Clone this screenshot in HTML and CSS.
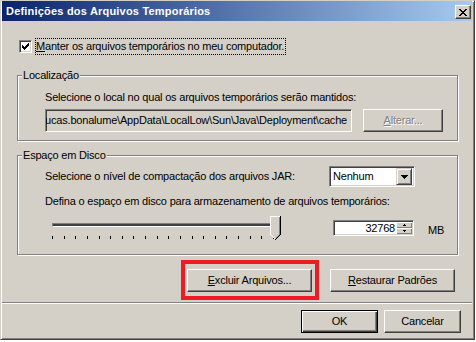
FILE: index.html
```html
<!DOCTYPE html>
<html lang="pt-BR">
<head>
    <meta charset="UTF-8">
    <meta name="viewport" content="width=device-width, initial-scale=1.0">
    <title>Definições dos Arquivos Temporários</title>
    <link rel="stylesheet" href="styles.css">
</head>
<body>
    <div class="window">
        <div class="titlebar">
            <span class="title">Definições dos Arquivos Temporários</span>
            <button class="close">
                <svg width="8" height="7" viewBox="0 0 8 7" shape-rendering="crispEdges"><path d="M0 0h2v1H0z M6 0h2v1H6z M1 1h2v1H1z M5 1h2v1H5z M2 2h4v1H2z M3 3h2v1H3z M2 4h4v1H2z M1 5h2v1H1z M5 5h2v1H5z M0 6h2v1H0z M6 6h2v1H6z"/></svg>
            </button>
        </div>
        <div class="content">
            <div class="keep">
                <span class="check">
                    <svg width="7" height="7" viewBox="0 0 7 7" shape-rendering="crispEdges"><path d="M6 0h1v1H6z M5 1h2v1H5z M0 2h1v1H0z M4 2h3v1H4z M0 3h2v1H0z M3 3h3v1H3z M0 4h5v1H0z M1 5h3v1H1z M2 6h1v1H2z"/></svg>
                </span>
                <span class="focus"><u>M</u>anter os arquivos temporários no meu computador.</span>
            </div>

            <div class="group loc">
                <div class="legend">Localização</div>
                <p class="label">Selecione o local no qual os arquivos temporários serão mantidos:</p>
                <div class="row">
                    <div class="field path"><span>C:\Users\lucas.bonalume\AppData\LocalLow\Sun\Java\Deployment\cache</span></div>
                    <button class="btn change disabled"><u>A</u>lterar...</button>
                </div>
            </div>

            <div class="group disk">
                <div class="legend">Espaço em Disco</div>
                <div class="row between">
                    <span>Selecione o nível de compactação dos arquivos JAR:</span>
                    <div class="combo">
                        <span class="combo-text">Nenhum</span>
                        <span class="drop">
                            <svg width="7" height="4" viewBox="0 0 7 4" shape-rendering="crispEdges"><path d="M0 0h7v1H0z M1 1h5v1H1z M2 2h3v1H2z M3 3h1v1H3z"/></svg>
                        </span>
                    </div>
                </div>
                <p class="label">Defina o espaço em disco para armazenamento de arquivos temporários:</p>
                <div class="row size">
                    <div class="slider">
                        <div class="track"></div>
                        <svg class="thumb" width="11" height="24" viewBox="0 0 11 24" shape-rendering="crispEdges">
                            <polygon points="0,0 11,0 11,19 5.5,24 0,19" fill="#d4d0c8"/>
                            <path fill="#fff" d="M0 0h10v1H1v18H0z M1 19h1v1H1z M2 20h1v1H2z M3 21h1v1H3z M4 22h1v1H4z"/>
                            <path fill="#808080" d="M9 1h1v18H9z M8 19h1v1H8z M7 20h1v1H7z M6 21h1v1H6z"/>
                            <path fill="#000" d="M10 0h1v19h-1z M9 19h1v1H9z M8 20h1v1H8z M7 21h1v1H7z M6 22h1v1H6z M5 23h1v1H5z"/>
                        </svg>
                        <div class="ticks">
                            <i></i><i></i><i></i><i></i><i></i><i></i><i></i><i></i><i></i><i></i>
                            <i></i><i></i><i></i><i></i><i></i><i></i><i></i><i></i><i></i><i></i>
                        </div>
                    </div>
                    <div class="spin">
                        <span class="spin-value">32768</span>
                        <span class="arrows">
                            <span class="arrow"><svg width="3" height="2" viewBox="0 0 3 2" shape-rendering="crispEdges"><path d="M1 0h1v1H1z M0 1h3v1H0z"/></svg></span>
                            <span class="arrow"><svg width="3" height="2" viewBox="0 0 3 2" shape-rendering="crispEdges"><path d="M0 0h3v1H0z M1 1h1v1H1z"/></svg></span>
                        </span>
                    </div>
                    <span class="unit">MB</span>
                </div>
            </div>

            <div class="actions">
                <span class="highlight"><button class="btn wide"><u>E</u>xcluir Arquivos...</button></span>
                <button class="btn wide"><u>R</u>estaurar Padrões</button>
            </div>
        </div>
        <div class="separator"></div>
        <div class="footer">
            <button class="btn default">OK</button>
            <button class="btn">Cancelar</button>
        </div>
    </div>
</body>
</html>
```
FILE: styles.css
```css
body{
    margin: 0;
    font: 11px/13px "Liberation Sans", Tahoma, sans-serif;
    letter-spacing: -0.2px;
    color: #000;
}
p{
    margin: 0;
}
u{
    text-decoration: underline;
}
.window{
    width: 475px;
    height: 340px;
    box-sizing: border-box;
    background: #d4d0c8;
    border: 1px solid;
    border-color: #d4d0c8 #404040 #404040 #d4d0c8;
    box-shadow: inset 1px 1px #fff, inset -1px -1px #808080;
    padding: 0 2px 0 1px;
}
.titlebar{
    height: 20px;
    display: flex;
    align-items: center;
    justify-content: space-between;
    padding: 0 1px 0 4px;
    background: linear-gradient(to right, #0a246a, #a6caf0);
    color: #fff;
    font-weight: bold;
    letter-spacing: 0.2px;
}
.close{
    width: 16px;
    height: 14px;
    margin-top: 2px;
    padding: 0;
    display: flex;
    align-items: center;
    justify-content: center;
    background: #d4d0c8;
    border: 1px solid;
    border-color: #fff #404040 #404040 #fff;
    box-shadow: inset -1px -1px #808080, inset 1px 1px #d4d0c8;
}
.close svg{
    display: block;
}

.content{
    padding: 17px 14px 0 15px;
}
.keep{
    display: flex;
    align-items: center;
    height: 17px;
}
.check{
    width: 13px;
    height: 13px;
    box-sizing: border-box;
    margin: 0 3px 0 2px;
    padding: 2px;
    background: #fff;
    border: 1px solid;
    border-color: #808080 #fff #fff #808080;
    box-shadow: inset 1px 1px #404040, inset -1px -1px #d4d0c8;
}
.check svg{
    display: block;
}
.focus{
    border: 1px dotted #000;
    padding: 1px 1px 1px 0;
}

/* group boxes */
.group{
    width: 441px;
    box-sizing: border-box;
    border: 1px solid #808080;
    box-shadow: inset 1px 1px #fff, 1px 1px #fff;
    padding-left: 27px;
}
.legend{
    width: fit-content;
    margin: -7px 0 0 -23px;
    padding: 0 1px;
    background: #d4d0c8;
}
.loc{
    margin-top: 20px;
    padding-bottom: 8px;
}
.loc .label{
    margin-top: 9px;
}
.row{
    display: flex;
    align-items: center;
}
.loc .row{
    margin-top: 5px;
}
.field{
    box-sizing: border-box;
    border: 1px solid;
    border-color: #808080 #fff #fff #808080;
    box-shadow: inset 1px 1px #404040, inset -1px -1px #d4d0c8;
}
.path{
    width: 307px;
    height: 23px;
    display: flex;
    align-items: center;
    justify-content: flex-end;
    overflow: hidden;
    white-space: nowrap;
    padding: 0 4px 0 2px;
    background: #d4d0c8;
}
.path span{
    flex: none;
}

.btn{
    height: 23px;
    width: 77px;
    padding: 0;
    font: inherit;
    letter-spacing: inherit;
    color: #000;
    background: #d4d0c8;
    border: 1px solid;
    border-color: #fff #404040 #404040 #fff;
    box-shadow: inset -1px -1px #808080, inset 1px 1px #d4d0c8;
}
.btn.change{
    width: 80px;
    margin-left: 11px;
}
.btn.wide{
    width: 125px;
    display: block;
}
.btn.disabled{
    color: #808080;
    text-shadow: 1px 1px #fff;
}
.btn.default{
    border: 1px solid #000;
    box-shadow: inset 1px 1px #fff, inset -1px -1px #404040, inset -2px -2px #808080;
}

.disk{
    margin-top: 14px;
    padding-bottom: 14px;
}
.between{
    justify-content: space-between;
    margin: 4px 42px 0 0;
}
.disk .label{
    margin-top: 8px;
}
.combo{
    width: 86px;
    height: 21px;
    box-sizing: border-box;
    display: flex;
    align-items: center;
    padding: 2px;
    background: #fff;
    border: 1px solid;
    border-color: #808080 #fff #fff #808080;
    box-shadow: inset 1px 1px #404040, inset -1px -1px #d4d0c8;
}
.combo-text{
    flex: 1;
    padding-left: 1px;
}
.drop{
    width: 16px;
    height: 17px;
    box-sizing: border-box;
    display: flex;
    align-items: center;
    justify-content: center;
    background: #d4d0c8;
    border: 1px solid;
    border-color: #d4d0c8 #404040 #404040 #d4d0c8;
    box-shadow: inset 1px 1px #fff, inset -1px -1px #808080;
}
.drop svg{
    display: block;
}

.size{
    margin-top: 8px;
    align-items: flex-start;
}
.slider{
    position: relative;
    width: 229px;
    height: 24px;
    margin-left: 7px;
}
.track{
    width: 227px;
    height: 2px;
    margin-top: 7px;
    background: #404040;
    border: 1px solid;
    border-color: #808080 #fff #fff #808080;
    box-sizing: content-box;
}
.thumb{
    position: absolute;
    left: 218px;
    top: 0;
}
.ticks{
    width: 222px;
    margin-top: 9px;
    display: flex;
    justify-content: space-between;
}
.ticks i{
    width: 1px;
    height: 3px;
    background: #000;
}
.spin{
    width: 81px;
    height: 16px;
    box-sizing: border-box;
    margin: 4px 0 0 52px;
    display: flex;
    padding: 1px;
    background: #fff;
    border: 1px solid;
    border-color: #808080 #fff #fff #808080;
    box-shadow: inset 1px 1px #404040, inset -1px -1px #d4d0c8;
}
.spin-value{
    flex: 1;
    text-align: right;
    line-height: 12px;
    padding-right: 1px;
}
.arrows{
    width: 16px;
    display: flex;
    flex-direction: column;
}
.arrow{
    flex: 1;
    display: flex;
    align-items: center;
    justify-content: center;
    background: #d4d0c8;
    box-shadow: inset 1px 1px #fff, inset -1px -1px #808080;
}
.arrow svg{
    display: block;
}
.unit{
    margin: 8px 0 0 14px;
}

.actions{
    margin-top: 5px;
    display: flex;
    align-items: center;
    justify-content: flex-end;
    gap: 11px;
    padding-right: 3px;
}
.highlight{
    border: 4px solid #ed1c24;
    padding: 5px 3px 4px 2px;
}
.separator{
    margin-top: 2px;
    border-top: 1px solid #808080;
    border-bottom: 1px solid #fff;
}
.footer{
    margin-top: 6px;
    display: flex;
    justify-content: flex-end;
    gap: 6px;
    padding-right: 11px;
}
```
